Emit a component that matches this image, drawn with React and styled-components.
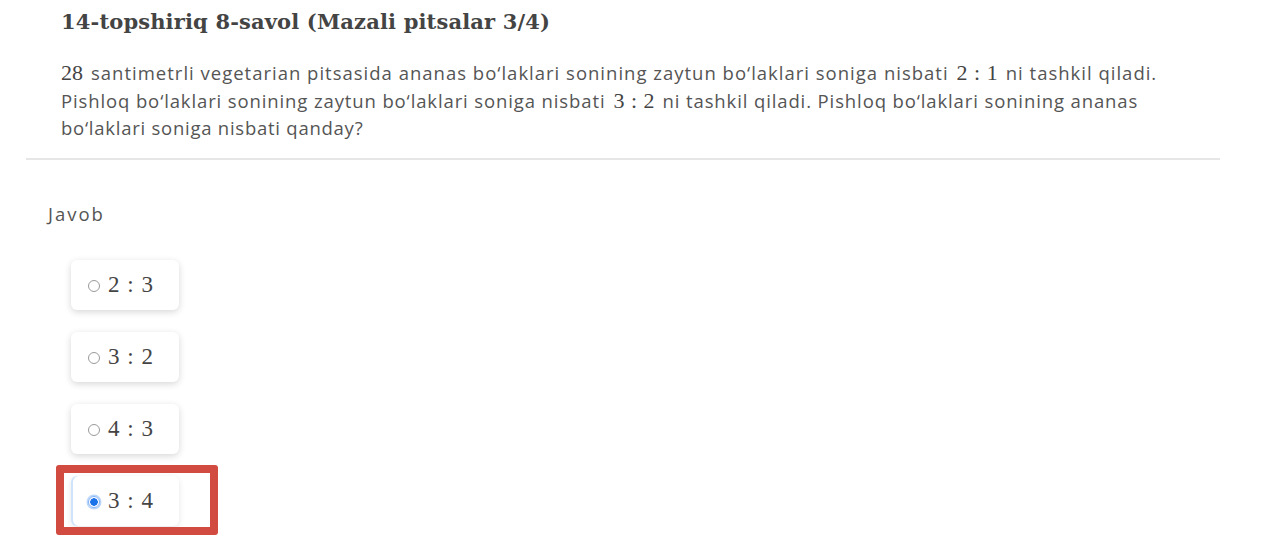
import React from "react";
import styled, { createGlobalStyle } from "styled-components";

const Global = createGlobalStyle`
  html, body { margin: 0; padding: 0; background: #fff; }
  body { font-family: "Open Sans", "Noto Sans", sans-serif; color: #555; }
`;

const Page = styled.div`
  width: 1280px;
  height: 546px;
  overflow: hidden;
  background: #fff;
`;

const Header = styled.header`
  padding: 8px 0 0 61px;
`;

const Title = styled.h1`
  margin: 0;
  font-family: "DejaVu Serif", "Liberation Serif", serif;
  font-weight: 700;
  font-size: 21px;
  line-height: 28px;
  color: #444;
  letter-spacing: 0.15px;
`;

const Question = styled.div`
  margin-top: 23px;
  font-size: 18.5px;
  line-height: 27.5px;
  color: #555;
`;

const Line = styled.div`
  white-space: nowrap;
  letter-spacing: ${(p) => p.$ls || "1px"};
`;

const M = styled.span`
  font-family: "Liberation Serif", serif;
  font-size: 22px;
  line-height: 1;
  color: #444;
  margin: ${(p) => (p.$first ? "0 8px 0 0" : "0 8px")};
  letter-spacing: 0;
  word-spacing: 1px;
`;

const Divider = styled.hr`
  margin: 16px 60px 0 26px;
  border: 0;
  height: 2px;
  background: #e6e6e6;
`;

const Answer = styled.section`
  padding: 43px 0 0 48px;
`;

const Label = styled.div`
  font-size: 18.5px;
  line-height: 22px;
  color: #555;
  letter-spacing: 2px;
`;

const Options = styled.div`
  display: flex;
  flex-direction: column;
  gap: 22px;
  padding: 35px 0 0 23px;
`;

const Card = styled.label`
  position: relative;
  display: flex;
  align-items: center;
  gap: 8px;
  width: 108px;
  height: 50px;
  box-sizing: border-box;
  padding-left: 17px;
  border-radius: 6px;
  background: #fff;
  box-shadow: ${(p) =>
    p.$selected
      ? "inset 2px 0 0 #cfe3fb, 0 2px 6px rgba(0,0,0,0.10)"
      : "0 2px 7px rgba(0,0,0,0.16)"};
`;

const Radio = styled.span`
  width: 12px;
  height: 12px;
  box-sizing: border-box;
  border-radius: 50%;
  border: 1px solid ${(p) => (p.$on ? "#7fb0f5" : "#9a9a9a")};
  background: ${(p) => (p.$on ? "radial-gradient(circle, #1a73e8 0 3.5px, #fff 4px)" : "#fff")};
  box-shadow: ${(p) => (p.$on ? "0 0 0 1.5px #b9d5fb" : "none")};
  flex: none;
  margin-top: 2px;
`;

const Ratio = styled.span`
  font-family: "Liberation Serif", serif;
  font-size: 23px;
  color: #444;
  word-spacing: 2px;
`;

const Highlight = styled.div`
  position: absolute;
  left: -15px;
  top: -11px;
  width: 162px;
  height: 70px;
  box-sizing: border-box;
  border: 8px solid #d24b40;
  border-radius: 3px;
  pointer-events: none;
`;

const options = ["2 : 3", "3 : 2", "4 : 3", "3 : 4"];

export default function App() {
  return (
    <Page>
      <Global />
      <Header>
        <Title>14-topshiriq 8-savol (Mazali pitsalar 3/4)</Title>
        <Question>
          <Line>
            <M $first>28</M>santimetrli vegetarian pitsasida ananas bo‘laklari sonining zaytun bo‘laklari soniga nisbati<M>2 : 1</M>ni tashkil qiladi.
          </Line>
          <Line $ls="0.88px">
            Pishloq bo‘laklari sonining zaytun bo‘laklari soniga nisbati<M>3 : 2</M>ni tashkil qiladi. Pishloq bo‘laklari sonining ananas
          </Line>
          <Line $ls="0.75px">bo‘laklari soniga nisbati qanday?</Line>
        </Question>
      </Header>
      <Divider />
      <Answer>
        <Label>Javob</Label>
        <Options>
          {options.map((o, i) => {
            const on = i === 3;
            return (
              <Card key={o} $selected={on}>
                <Radio $on={on} />
                <Ratio>{o}</Ratio>
                {on && <Highlight />}
              </Card>
            );
          })}
        </Options>
      </Answer>
    </Page>
  );
}
